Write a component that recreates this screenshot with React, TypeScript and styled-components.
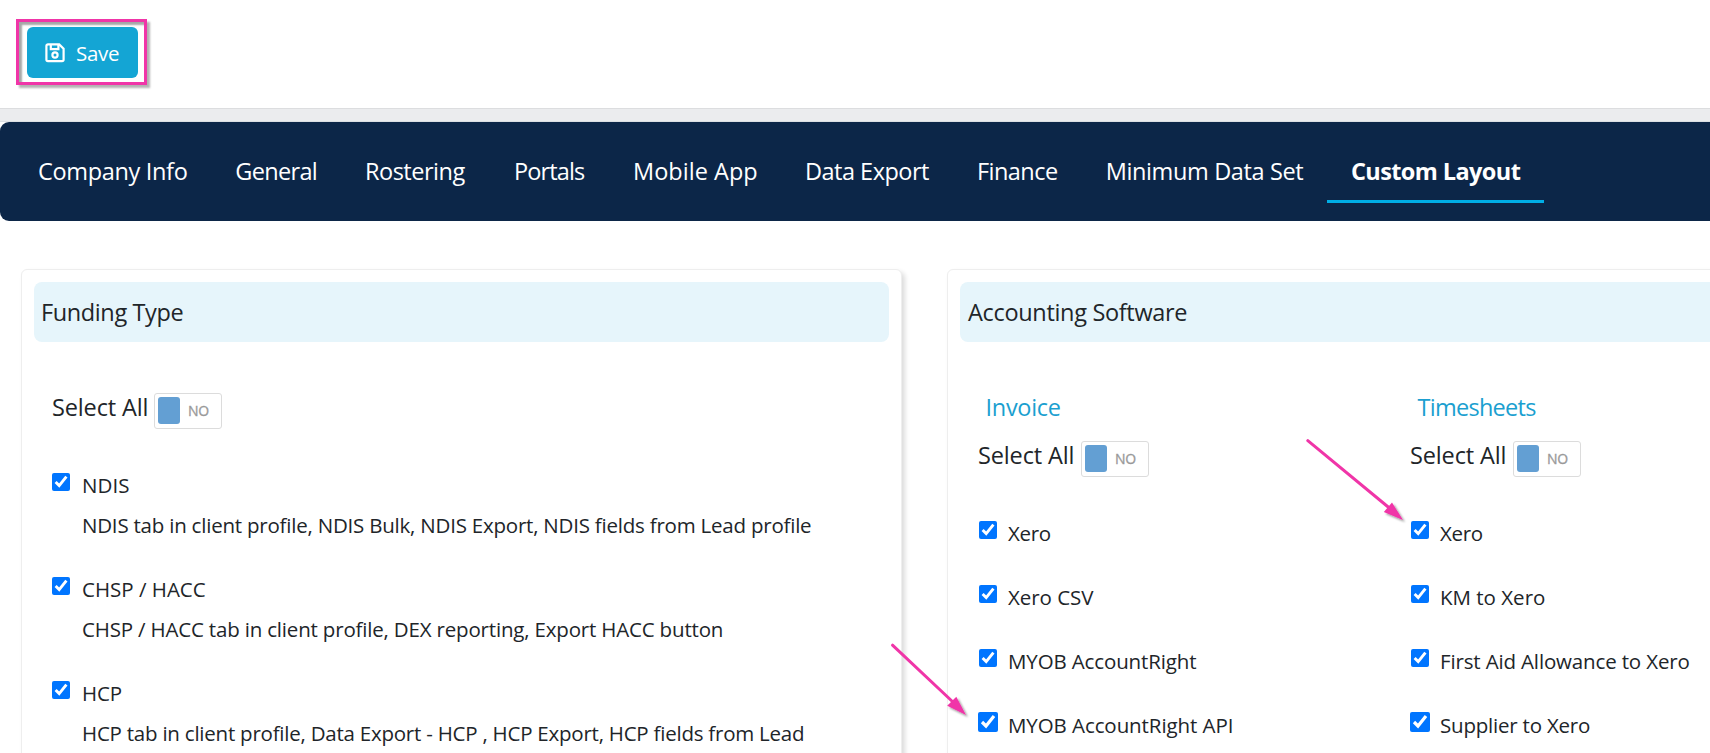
import React from 'react';
import styled, { createGlobalStyle } from 'styled-components';

const GlobalStyle = createGlobalStyle`
  *, *::before, *::after { box-sizing: border-box; }
  html, body { margin: 0; background: #fff; overflow: hidden; }
  body { font-family: "Open Sans", "Noto Sans", sans-serif; color: #212529; }
`;

const Page = styled.div`
  position: relative;
  width: 100%;
  height: 753px;
  overflow: hidden;
`;

const Toolbar = styled.header`
  display: flex;
  align-items: flex-start;
  height: 108px;
  padding: 27px 0 0 27px;
`;

const SaveWrap = styled.div`
  position: relative;
`;

const SaveButton = styled.button`
  display: flex;
  align-items: center;
  gap: 11px;
  width: 111px;
  height: 51px;
  padding: 0 0 0 18px;
  border: 0;
  border-radius: 6px;
  background: #14a5d4;
  color: #fff;
  font: 400 20.5px/50px "Open Sans", sans-serif;
  letter-spacing: -0.3px;
`;

const Highlight = styled.div`
  position: absolute;
  inset: -8px -9px -7px -11px;
  border: 3px solid #f035a8;
  box-shadow: 3px 3px 2px rgba(0, 0, 0, 0.3), inset 3px 3px 2px rgba(0, 0, 0, 0.35);
  pointer-events: none;
`;

const Band = styled.div`
  height: 14px;
  background: #ebecee;
  border-top: 1px solid #dcdddf;
  border-bottom: 1px solid #dcdfe3;
`;

const Nav = styled.nav`
  display: flex;
  height: 99px;
  padding: 31px 0 0 14px;
  background: #0c2648;
  border-radius: 9px 0 0 9px;
`;

const Tab = styled.a<{ $width: number; $spacing: number; $active?: boolean }>`
  flex: none;
  width: ${(p) => p.$width}px;
  height: 50px;
  padding-left: 24px;
  border-bottom: 3px solid ${(p) => (p.$active ? '#00aee6' : 'transparent')};
  color: #fff;
  font-size: 23.5px;
  font-weight: ${(p) => (p.$active ? 700 : 400)};
  line-height: 36px;
  letter-spacing: ${(p) => p.$spacing}px;
  white-space: nowrap;
`;

const Cards = styled.main`
  display: flex;
  gap: 45px;
  padding: 48px 0 0 21px;
`;

const Card = styled.section`
  flex: none;
  width: 881px;
  height: 560px;
  padding: 12px;
  border: 1px solid #eeeeee;
  border-radius: 6px;
  background: #fff;
  box-shadow: 3px 3px 5px rgba(0, 0, 0, 0.14);
`;

const CardTitle = styled.h2<{ $spacing: number; $inset?: number }>`
  height: 60px;
  margin: 0;
  padding-left: ${(p) => p.$inset ?? 7}px;
  border-radius: 8px;
  background: #e6f5fb;
  font-size: 23.5px;
  font-weight: 400;
  line-height: 60px;
  letter-spacing: ${(p) => p.$spacing}px;
`;

const Columns = styled.div`
  display: flex;
  padding: 47px 0 0 18px;
`;

const Column = styled.div<{ $width?: number }>`
  flex: none;
  width: ${(p) => p.$width ?? 820}px;
`;

const ColumnTitle = styled.h3<{ $spacing: number }>`
  height: 48px;
  margin: 0;
  padding-left: 7.5px;
  color: #1b9fd0;
  font-size: 23.5px;
  font-weight: 400;
  line-height: 36px;
  letter-spacing: ${(p) => p.$spacing}px;
`;

const SelectAll = styled.div`
  display: flex;
  height: 77px;
  font-size: 23.5px;
  line-height: 36px;
  letter-spacing: -0.13px;
`;

const SelectLabel = styled.span<{ $width: number }>`
  width: ${(p) => p.$width}px;
`;

const Toggle = styled.span`
  display: flex;
  align-items: center;
  gap: 8px;
  width: 68px;
  height: 36px;
  margin-top: 4px;
  padding-left: 3px;
  border: 1px solid #dcdcdc;
  border-radius: 3px;
  color: #999;
  font-size: 14px;
  line-height: 34px;
  letter-spacing: -0.3px;
  -webkit-text-stroke: 0.3px #999;
`;

const Knob = styled.span`
  width: 22px;
  height: 27px;
  margin-bottom: 1px;
  border-radius: 3px;
  background: #639fd3;
`;

const Option = styled.label<{ $height: number; $gap: number }>`
  display: flex;
  gap: ${(p) => p.$gap}px;
  height: ${(p) => p.$height}px;
`;

const Check = styled.input<{ $size: number; $indent: number }>`
  flex: none;
  width: ${(p) => p.$size}px;
  height: ${(p) => p.$size}px;
  margin: ${(p) => 7 - (p.$size - 18) / 2}px ${(p) => (18 - p.$size) / 2}px 0
    ${(p) => p.$indent - (p.$size - 18) / 2}px;
  accent-color: #0075ff;
`;

const OptionText = styled.span`
  display: flex;
  flex-direction: column;
`;

const Line = styled.span<{ $spacing: number; $height?: number }>`
  font-size: 20.5px;
  line-height: ${(p) => p.$height ?? 39}px;
  letter-spacing: ${(p) => p.$spacing}px;
  white-space: nowrap;
`;

const Arrows = styled.svg`
  position: absolute;
  inset: 0;
  pointer-events: none;
`;

const SaveIcon = () => (
  <svg width="20" height="20" viewBox="0 0 20 20" fill="none" stroke="#fff" strokeWidth="2.2">
    <path d="M3 1.4H14.2L18.6 5.8V16.6A1.6 1.6 0 0 1 17 18.2H3A1.6 1.6 0 0 1 1.4 16.6V3A1.6 1.6 0 0 1 3 1.4Z" />
    <path d="M5.8 1.4V6.2H13.4V1.4" />
    <circle cx="10" cy="12" r="2.6" />
  </svg>
);

const tabs: [string, number, number][] = [
  ['Company Info', 197.3, -0.33],
  ['General', 129.7, -0.68],
  ['Rostering', 149, -0.49],
  ['Portals', 119, -0.86],
  ['Mobile App', 172, 0.03],
  ['Data Export', 171.9, -0.51],
  ['Finance', 128.8, -0.51],
  ['Minimum Data Set', 245.3, -0.37],
  ['Custom Layout', 217, -0.6],
];

interface Item {
  label: string;
  spacing: number;
  detail?: string;
  detailSpacing?: number;
  size?: number;
}

const funding: Item[] = [
  {
    label: 'NDIS',
    spacing: 0.05,
    detail: 'NDIS tab in client profile, NDIS Bulk, NDIS Export, NDIS fields from Lead profile',
    detailSpacing: -0.218,
  },
  {
    label: 'CHSP / HACC',
    spacing: 0,
    detail: 'CHSP / HACC tab in client profile, DEX reporting, Export HACC button',
    detailSpacing: -0.18,
  },
  {
    label: 'HCP',
    spacing: -0.15,
    detail: 'HCP tab in client profile, Data Export - HCP , HCP Export, HCP fields from Lead',
    detailSpacing: -0.23,
  },
];

const invoice: Item[] = [
  { label: 'Xero', spacing: -0.35 },
  { label: 'Xero CSV', spacing: -0.05 },
  { label: 'MYOB AccountRight', spacing: -0.13 },
  { label: 'MYOB AccountRight API', spacing: -0.08, size: 20 },
];

const timesheets: Item[] = [
  { label: 'Xero', spacing: -0.35 },
  { label: 'KM to Xero', spacing: 0 },
  { label: 'First Aid Allowance to Xero', spacing: -0.15 },
  { label: 'Supplier to Xero', spacing: -0.21, size: 20 },
];

interface OptionsProps {
  items: Item[];
  height: number;
  indent?: number;
  gap?: number;
  labelWidth?: number;
}

const Options = ({ items, height, indent = 1, gap = 11, labelWidth = 103 }: OptionsProps) => (
  <>
    <SelectAll>
      <SelectLabel $width={labelWidth}>Select All</SelectLabel>
      <Toggle>
        <Knob />
        NO
      </Toggle>
    </SelectAll>
    {items.map((item) => (
      <Option key={item.label} $height={height} $gap={gap}>
        <Check type="checkbox" defaultChecked $size={item.size ?? 18} $indent={indent} />
        <OptionText>
          <Line $spacing={item.spacing}>{item.label}</Line>
          {item.detail && (
            <Line $spacing={item.detailSpacing ?? 0} $height={40}>
              {item.detail}
            </Line>
          )}
        </OptionText>
      </Option>
    ))}
  </>
);

export default function App() {
  return (
    <Page>
      <GlobalStyle />
      <Toolbar>
        <SaveWrap>
          <SaveButton>
            <SaveIcon />
            Save
          </SaveButton>
          <Highlight />
        </SaveWrap>
      </Toolbar>
      <Band />
      <Nav>
        {tabs.map(([name, width, spacing]) => (
          <Tab key={name} $width={width} $spacing={spacing} $active={name === 'Custom Layout'}>
            {name}
          </Tab>
        ))}
      </Nav>
      <Cards>
        <Card>
          <CardTitle $spacing={-0.38}>Funding Type</CardTitle>
          <Columns>
            <Column>
              <Options items={funding} height={104} indent={0} gap={12} labelWidth={102} />
            </Column>
          </Columns>
        </Card>
        <Card>
          <CardTitle $spacing={-0.32} $inset={8}>
            Accounting Software
          </CardTitle>
          <Columns>
            <Column $width={432}>
              <ColumnTitle $spacing={-0.3}>Invoice</ColumnTitle>
              <Options items={invoice} height={64} />
            </Column>
            <Column $width={400}>
              <ColumnTitle $spacing={-0.72}>Timesheets</ColumnTitle>
              <Options items={timesheets} height={64} />
            </Column>
          </Columns>
        </Card>
      </Cards>
      <Arrows width="1710" height="753" viewBox="0 0 1710 753">
        <defs>
          <filter id="shade" x="-10%" y="-10%" width="130%" height="130%">
            <feDropShadow dx="2" dy="2" stdDeviation="1" floodColor="#000" floodOpacity="0.4" />
          </filter>
        </defs>
        <g stroke="#f035a8" strokeWidth="3" strokeLinecap="round">
          <path d="M892.5 645.2L954 703" />
          <path d="M1307.8 440.6L1390 508.5" />
        </g>
        <g fill="#f035a8" filter="url(#shade)">
          <path d="M966 715L947.2 705.8L956.3 696.8Z" />
          <path d="M1403 520L1383.8 512L1392 502.5Z" />
        </g>
      </Arrows>
    </Page>
  );
}
